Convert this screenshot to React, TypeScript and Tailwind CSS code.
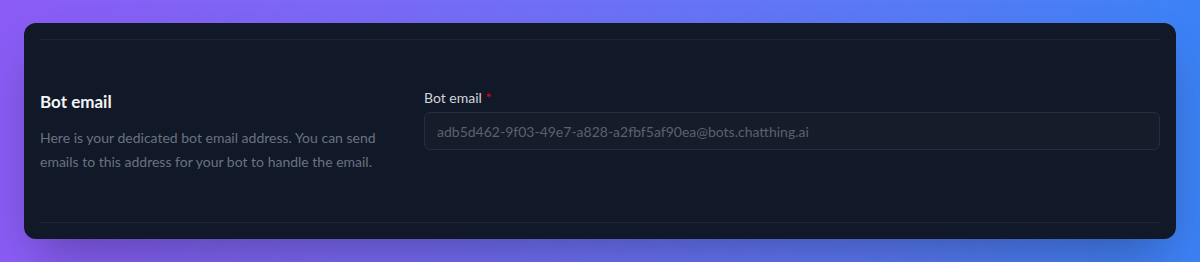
import React from 'react';

const font = { fontFamily: 'Lato, "Noto Sans", sans-serif' };

export default function App() {
  return (
    <div
      className="min-h-screen w-full bg-gradient-to-r from-[#8b5cf6] to-[#3b82f6] px-6 pt-[23px] pb-6"
      style={font}
    >
      <div className="rounded-xl bg-[#111827] px-4 py-4 shadow-2xl shadow-black/30">
        <div className="grid grid-cols-3 gap-x-8 border-y border-[#1e2533] py-12">
          {/* 左: 説明 */}
          <div>
            <h3 className="text-[17px] font-bold leading-7 text-gray-100">Bot email</h3>
            <p className="mt-[10px] text-sm leading-6 text-gray-500">
              Here is your dedicated bot email address. You can send emails to this
              address for your bot to handle the email.
            </p>
          </div>

          {/* 右: 入力欄 */}
          <div className="col-span-2">
            <label className="block text-sm leading-5 text-gray-300">
              Bot email <span className="text-red-600">*</span>
            </label>
            <input
              readOnly
              value="adb5d462-9f03-49e7-a828-a2fbf5af90ea@bots.chatthing.ai"
              className="mt-1 block h-[38px] w-full rounded-md border border-[#262d3b] bg-[#161c2a] px-3 text-sm text-[#5a6170] outline-none"
              style={font}
            />
          </div>
        </div>
      </div>
    </div>
  );
}
